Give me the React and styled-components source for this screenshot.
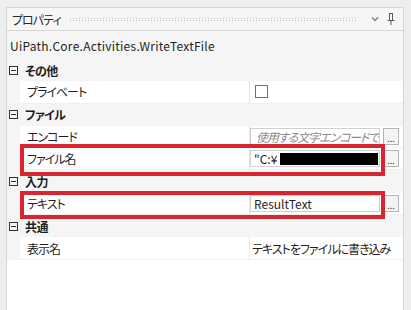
import React from 'react';
import styled, { createGlobalStyle } from 'styled-components';

const GlobalStyle = createGlobalStyle`
  html, body {
    margin: 0;
    background: #eeeeee;
  }
  body {
    font-family: "Noto Sans CJK JP", "Noto Sans", sans-serif;
    font-feature-settings: "palt";
    font-size: 12px;
    color: #1e1e1e;
  }
`;

const Frame = styled.div`
  padding: 7px 7px 0 6px;
  height: 310px;
  box-sizing: border-box;
`;

const Panel = styled.div`
  height: 100%;
  border: 1px solid #d6d6d6;
  border-bottom: none;
  background: #f5f5f5;
  display: flex;
  flex-direction: column;
`;

const TitleBar = styled.div`
  height: 22px;
  display: flex;
  align-items: center;
  padding: 0 8px 0 5px;
  gap: 8px;
  border-bottom: 1px solid #d6d6d6;
  background: #f6f6f6;
`;

const Title = styled.span`
  color: #2a2a2a;
  letter-spacing: -1px;
`;

const Dots = styled.div`
  flex: 1;
  height: 5px;
  margin-right: 6px;
  background-image: radial-gradient(circle, #b8b8b8 0.7px, transparent 0.8px);
  background-size: 3px 2.5px;
`;

const TitleIcon = styled.svg`
  flex: none;
  display: block;
`;

const TypeName = styled.div`
  height: 28px;
  display: flex;
  align-items: center;
  padding-left: 3px;
  letter-spacing: 0.25px;
  color: #1e1e1e;
`;

const Grid = styled.div`
  flex: 1;
  background: #ffffff;
  display: grid;
  grid-auto-rows: 22.3px;
  align-content: start;
`;

const CategoryRow = styled.div`
  display: flex;
  align-items: center;
  gap: 7px;
  padding-left: 2px;
  background: #f5f5f5;
  font-weight: 700;
  letter-spacing: -0.6px;
`;

const Expander = styled.span`
  width: 7px;
  height: 7px;
  border: 1px solid #333;
  position: relative;
  flex: none;
  &::after {
    content: '';
    position: absolute;
    left: 1px;
    right: 1px;
    top: 3px;
    height: 1px;
    background: #333;
  }
`;

const PropertyRow = styled.div`
  position: relative;
  display: grid;
  grid-template-columns: 13px 229px 1fr;
`;

const Gutter = styled.div`
  background: #f5f5f5;
`;

const NameCell = styled.div`
  display: flex;
  align-items: center;
  padding-left: 7px;
  letter-spacing: -1px;
  border-bottom: 1px solid #f0f0f0;
`;

const ValueCell = styled.div`
  display: flex;
  align-items: center;
  gap: 3px;
  padding-left: 2px;
  border-left: 1px solid #e6e6e6;
  border-bottom: 1px solid #f0f0f0;
  white-space: nowrap;
  overflow: hidden;
`;

const Editor = styled.div`
  width: 130px;
  height: 17px;
  box-sizing: border-box;
  border: 1px solid #d0d0d0;
  background: #fff;
  display: flex;
  align-items: center;
  padding-left: ${({ $placeholder }) => ($placeholder ? '5px' : '3px')};
  overflow: hidden;
  white-space: nowrap;
  margin-left: -2px;
  color: ${({ $placeholder }) => ($placeholder ? '#8c8c8c' : '#1e1e1e')};
  font-style: ${({ $placeholder }) => ($placeholder ? 'italic' : 'normal')};
  letter-spacing: ${({ $placeholder }) => ($placeholder ? '-1.1px' : '0')};
`;

const Redacted = styled.span`
  display: inline-block;
  width: 98px;
  height: 12px;
  margin-left: 3px;
  background: #000;
`;

const EllipsisButton = styled.div`
  width: 16px;
  height: 17px;
  box-sizing: border-box;
  border: 1px solid #b4b4b4;
  background: #f4f4f4;
  display: flex;
  align-items: flex-end;
  justify-content: center;
  overflow: hidden;
  font-size: 9px;
  line-height: 11px;
  color: #333;
`;

const CheckBox = styled.span`
  width: 13px;
  height: 13px;
  box-sizing: border-box;
  border: 1px solid #707070;
  background: #fff;
  margin-left: 3px;
`;

const PlainValue = styled.span`
  letter-spacing: -1px;
`;

const Highlight = styled.div`
  position: absolute;
  left: 13px;
  width: 365px;
  top: ${({ $top }) => $top}px;
  height: ${({ $height }) => $height}px;
  box-sizing: border-box;
  border: 4px solid #d7262f;
  pointer-events: none;
`;

const Category = ({ label }) => (
  <CategoryRow>
    <Expander />
    {label}
  </CategoryRow>
);

const Property = ({ name, children, highlight }) => (
  <PropertyRow>
    <Gutter />
    <NameCell>{name}</NameCell>
    <ValueCell>{children}</ValueCell>
    {highlight && <Highlight $top={highlight.top} $height={highlight.height} />}
  </PropertyRow>
);

const App = () => (
  <>
    <GlobalStyle />
    <Frame>
      <Panel>
        <TitleBar>
          <Title>プロパティ</Title>
          <Dots />
          <TitleIcon width="8" height="6" viewBox="0 0 8 6">
            <path d="M1 1.5 L4 4.5 L7 1.5" fill="none" stroke="#707070" strokeWidth="1.2" />
          </TitleIcon>
          <TitleIcon width="8" height="12" viewBox="0 0 8 12">
            <path d="M2 0.5 H6 M2.5 0.5 V7 M5.5 0.5 V7 M0.5 7.5 H7.5 M4 7.5 V12" fill="none" stroke="#5a5a5a" strokeWidth="1" />
          </TitleIcon>
        </TitleBar>
        <TypeName>UiPath.Core.Activities.WriteTextFile</TypeName>
        <Grid>
          <Category label="その他" />
          <Property name="プライベート">
            <CheckBox />
          </Property>
          <Category label="ファイル" />
          <Property name="エンコード">
            <Editor $placeholder>使用する文字エンコードで</Editor>
            <EllipsisButton>...</EllipsisButton>
          </Property>
          <Property name="ファイル名" highlight={{ top: -4, height: 32 }}>
            <Editor>"C:¥<Redacted /></Editor>
            <EllipsisButton>...</EllipsisButton>
          </Property>
          <Category label="入力" />
          <Property name="テキスト" highlight={{ top: -2, height: 28 }}>
            <Editor>ResultText</Editor>
            <EllipsisButton>...</EllipsisButton>
          </Property>
          <Category label="共通" />
          <Property name="表示名">
            <PlainValue>テキストをファイルに書き込み</PlainValue>
          </Property>
        </Grid>
      </Panel>
    </Frame>
  </>
);

export default App;
